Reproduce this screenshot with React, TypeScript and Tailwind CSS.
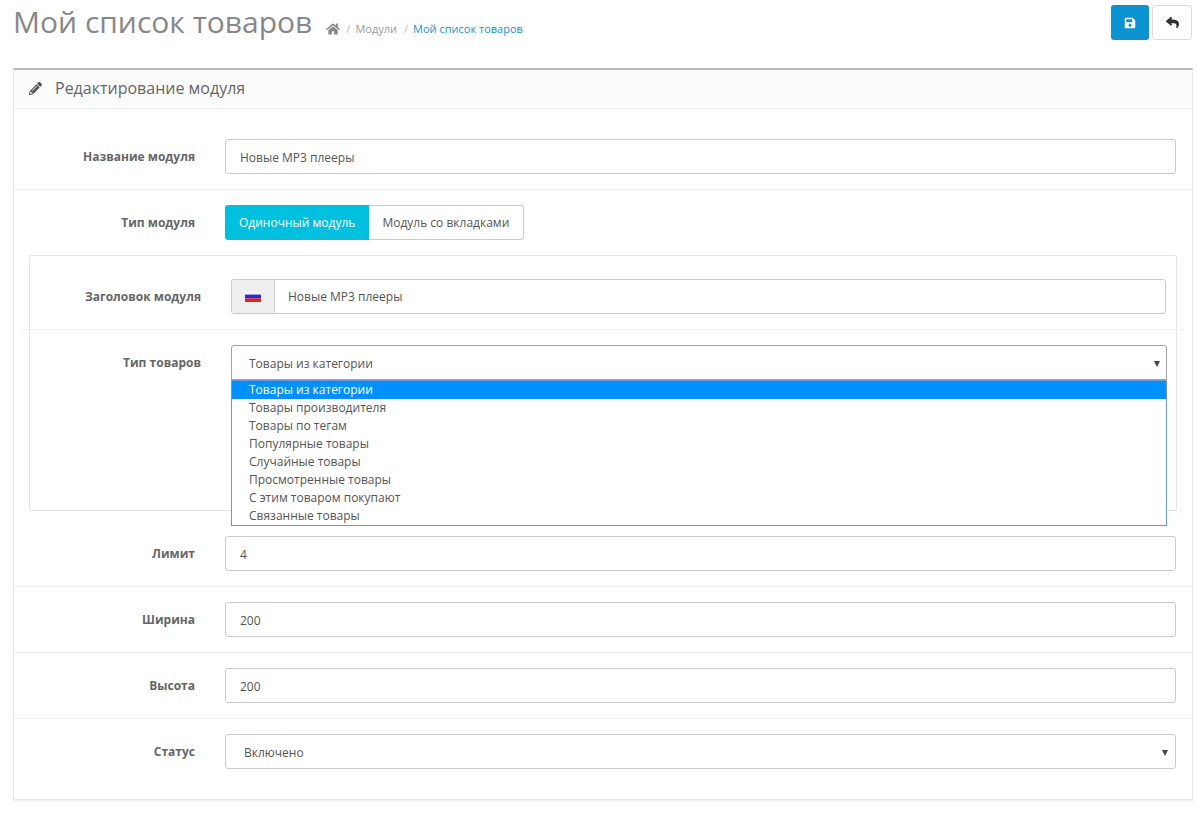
import { FaHome, FaPencilAlt, FaSave, FaReply } from "react-icons/fa";

const font = { fontFamily: '"Open Sans", "Noto Sans", sans-serif' };

function Label({ text, width }: { text: string; width: string }) {
  return (
    <div className={`${width} shrink-0 pr-[30px] text-right text-[12px] font-bold leading-[20px] text-[#666] pt-[8px]`}>
      {text}
    </div>
  );
}

function Field({ value }: { value: string }) {
  return (
    <div className="h-[35px] flex-1 rounded-[3px] border border-[#ccc] bg-white px-[14px] text-[12px] leading-[35px] text-[#555]">
      {value}
    </div>
  );
}

function Caret() {
  return <div className="h-0 w-0 border-x-[3.5px] border-t-[6px] border-x-transparent border-t-[#444]" />;
}

function Row({ label, children, border = true, pt = "pt-[15px]", pb = "pb-[15px]" }: { label: string; children: React.ReactNode; border?: boolean; pt?: string; pb?: string }) {
  return (
    <div className={`flex pr-[16px] ${pt} ${pb} ${border ? "border-b border-[#eee]" : ""}`}>
      <Label text={label} width="w-[211px]" />
      {children}
    </div>
  );
}

const options = [
  "Товары из категории",
  "Товары производителя",
  "Товары по тегам",
  "Популярные товары",
  "Случайные товары",
  "Просмотренные товары",
  "С этим товаром покупают",
  "Связанные товары",
];

export default function App() {
  return (
    <div style={font} className="h-[816px] w-[1198px] overflow-hidden bg-white pr-[6px] pl-[13px]">
      <header className="flex h-[68px] items-start justify-between">
        <div className="flex items-start pt-[2px]">
          <h1 className="text-[30px] font-normal leading-[40px] text-[#888]">Мой список товаров</h1>
          <nav className="mt-[19px] ml-[14px] flex items-center gap-[5px] text-[11px] leading-[16px] text-[#999]">
            <FaHome className="mr-[1px] text-[14px] text-[#888]" />
            <span className="text-[#bbb]">/</span>
            <span>Модули</span>
            <span className="ml-[2px] text-[#bbb]">/</span>
            <span className="text-[#1e91cf]">Мой список товаров</span>
          </nav>
        </div>
        <div className="mt-[5px] flex gap-[3px]">
          <button className="flex h-[35px] w-[38px] items-center justify-center rounded-[3px] bg-[#0b92d0] text-[12px] text-white">
            <FaSave />
          </button>
          <button className="flex h-[35px] w-[40px] items-center justify-center rounded-[3px] border border-[#ddd] bg-white text-[13px] text-[#333]">
            <FaReply />
          </button>
        </div>
      </header>

      <section className="h-[732px] w-[1180px] border border-t-0 border-[#e8e8e8] shadow-[0_1px_1px_rgba(0,0,0,0.05)]">
        <div className="-mx-px flex h-[41px] items-center border border-t-2 border-[#e8e8e8] border-t-[#bbb] border-b-[#eee] bg-[#fcfcfc] pb-[2px] pl-[15px]">
          <FaPencilAlt className="text-[13px] text-[#555]" />
          <h2 className="ml-[13px] text-[16px] font-normal text-[#666]">Редактирование модуля</h2>
        </div>

        <Row label="Название модуля" pt="pt-[30px]">
          <Field value="Новые МР3 плееры" />
        </Row>

        <div className="flex pt-[15px] pr-[16px]">
          <Label text="Тип модуля" width="w-[211px]" />
          <div className="flex h-[35px] text-[12px] leading-[35px]">
            <div className="rounded-l-[3px] bg-[#00c0e0] px-[14px] text-white">Одиночный модуль</div>
            <div className="rounded-r-[3px] border border-l-0 border-[#ccc] pr-[14px] pl-[13px] leading-[33px] text-[#555]">Модуль со вкладками</div>
          </div>
        </div>

        <div className="mx-[15px] mt-[15px] h-[256px] w-[1148px] rounded-[2px] border border-[#e4e4e4]">
          <div className="-mx-[8px] flex border-b border-[#eee] px-[8px] pt-[23px] pb-[15px]">
            <Label text="Заголовок модуля" width="w-[201px]" />
            <div className="flex h-[35px] w-[935px] rounded-[3px] border border-[#ccc] text-[12px]">
              <div className="flex w-[43px] items-center justify-center border-r border-[#ccc] bg-[#eee]">
                <svg width="16" height="11" viewBox="0 0 16 11">
                  <rect width="16" height="3.6" fill="#f4f4f4" />
                  <rect y="3.6" width="16" height="3.7" fill="#2c2cd0" />
                  <rect y="7.3" width="16" height="3.7" fill="#d8222c" />
                </svg>
              </div>
              <div className="pl-[13px] leading-[33px] text-[#555]">Новые МР3 плееры</div>
            </div>
          </div>
          <div className="flex pt-[15px]">
            <Label text="Тип товаров" width="w-[201px]" />
            <div className="relative h-[35px] w-[936px]">
              <div className="flex h-[35px] items-center justify-between rounded-t-[3px] border border-[#a4a4a4] pt-[2px] pr-[6px] pl-[17px] text-[12px] text-[#555]">
                <span>Товары из категории</span>
                <Caret />
              </div>
              <ul className="absolute top-[35px] left-0 z-10 w-full border border-[#6d97d0] bg-white text-[12px] leading-[18px] text-[#555]">
                {options.map((o, i) => (
                  <li key={o} className={`pl-[17px] ${i === 0 ? "bg-[#0090ff] text-white" : ""}`}>
                    {o}
                  </li>
                ))}
              </ul>
            </div>
          </div>
        </div>

        <Row label="Лимит" pt="pt-[25px]">
          <Field value="4" />
        </Row>
        <Row label="Ширина">
          <Field value="200" />
        </Row>
        <Row label="Высота">
          <Field value="200" />
        </Row>
        <Row label="Статус" border={false}>
          <div className="flex h-[35px] flex-1 items-center justify-between rounded-[3px] border border-[#ccc] pt-[2px] pr-[7px] pl-[18px] text-[12px] text-[#555]">
            <span>Включено</span>
            <Caret />
          </div>
        </Row>
      </section>
    </div>
  );
}
